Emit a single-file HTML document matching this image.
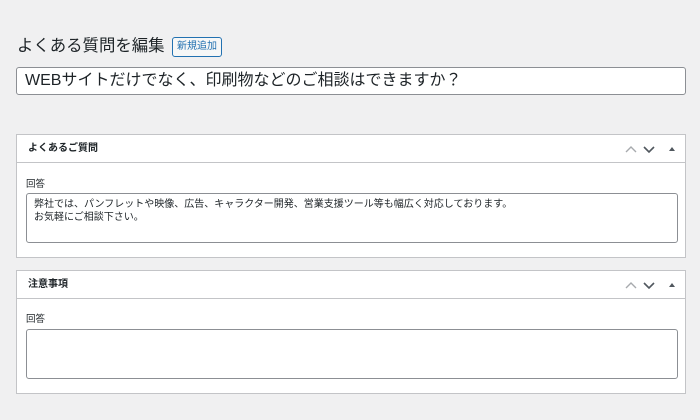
<!DOCTYPE html>
<html><head><meta charset="utf-8"><style>
body{margin:0;width:700px;height:420px;background:#f0f0f1;font-family:"Liberation Sans","Noto Sans CJK JP",sans-serif;color:#1d2327;position:relative;overflow:hidden}
.a{position:absolute}
h1{position:absolute;left:17px;top:34px;margin:0;font-size:16.4px;font-weight:400;line-height:24px}
.btn{left:172px;top:37px;width:48px;height:18px;border:1px solid #2271b1;border-radius:3px;color:#2271b1;font-size:10px;line-height:18px;text-align:center;background:#f6f7f7}
.ti{left:16px;top:67px;border:1px solid #8c8f94;border-radius:3px;background:#fff;font-size:16px;line-height:26px;padding-left:8px;box-sizing:border-box;width:670px;height:28px}
.box{left:16px;width:670px;background:#fff;border:1px solid #c3c4c7;box-sizing:border-box}
.hd{height:27px;border-bottom:1px solid #c3c4c7;font-size:10px;font-weight:700;line-height:27px;padding-left:11px;position:relative}
.lb{font-size:9.5px;position:absolute;left:9px}
.ta{position:absolute;left:9px;width:652px;height:50px;border:1px solid #8c8f94;border-radius:3px;box-sizing:border-box;font-size:10px;line-height:13px;padding:4px 7px}
.ic{position:absolute;top:0;right:0;height:27px}
</style></head><body>
<h1>よくある質問を編集</h1>
<div class="a btn">新規追加</div>
<div class="a ti">WEBサイトだけでなく、印刷物などのご相談はできますか？</div>

<div class="a box" style="top:134px;height:124px">
<div class="hd">よくあるご質問
<svg class="ic" width="70" height="27"><path d="M11 17l5-5 5 5" stroke="#a7aaad" stroke-width="1.4" fill="none"/><path d="M29 12l5 5 5-5" stroke="#50575e" stroke-width="1.6" fill="none"/><path d="M54 16l3-4 3 4z" fill="#50575e"/></svg></div>
<div class="lb" style="top:41px">回答</div>
<div class="ta" style="top:58px">弊社では、パンフレットや映像、広告、キャラクター開発、営業支援ツール等も幅広く対応しております。<br>お気軽にご相談下さい。</div>
</div>

<div class="a box" style="top:270px;height:124px">
<div class="hd">注意事項
<svg class="ic" width="70" height="27"><path d="M11 17l5-5 5 5" stroke="#a7aaad" stroke-width="1.4" fill="none"/><path d="M29 12l5 5 5-5" stroke="#50575e" stroke-width="1.6" fill="none"/><path d="M54 16l3-4 3 4z" fill="#50575e"/></svg></div>
<div class="lb" style="top:40px">回答</div>
<div class="ta" style="top:58px"></div>
</div>
</body></html>
